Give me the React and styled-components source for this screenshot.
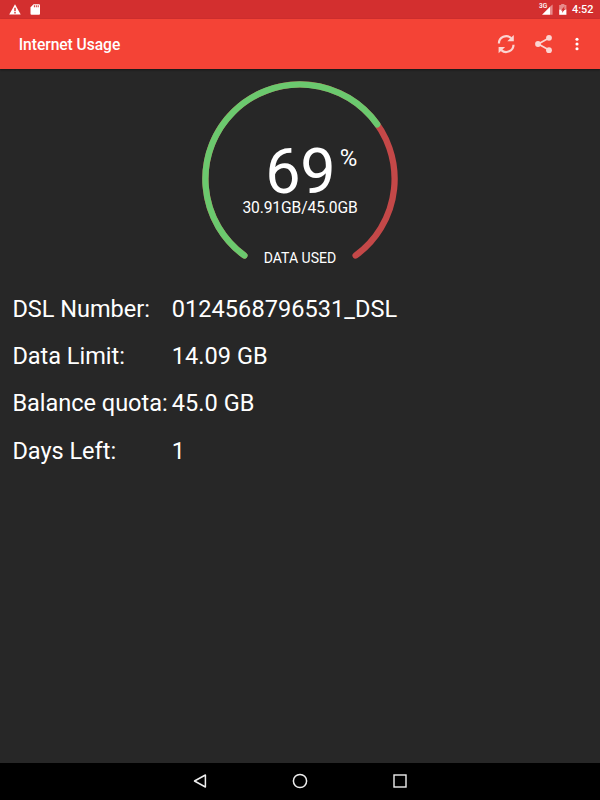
import styled, { createGlobalStyle } from 'styled-components';

const GlobalStyle = createGlobalStyle`
	* {
		box-sizing: border-box;
	}
	body {
		margin: 0;
		background-color: #272727;
		font-family: Roboto, 'Liberation Sans', sans-serif;
	}
	svg {
		display: block;
		flex-shrink: 0;
	}
`;

const Screen = styled.div`
	display: flex;
	flex-direction: column;
	width: 600px;
	height: 800px;
	overflow: hidden;
	background-color: #272727;
	color: #fff;
`;

const StatusBar = styled.div`
	display: flex;
	justify-content: space-between;
	height: 18.75px;
	background-color: #d32f2f;
`;
const StatusGroup = styled.div`
	display: flex;
	align-items: center;
`;
const Clock = styled.span`
	width: 28px;
	font-size: 10.9px;
	font-weight: 500;
	line-height: 19px;
	white-space: nowrap;
	padding-top: 1px;
`;
const NetworkType = styled.span`
	align-self: flex-start;
	margin-top: 3px;
	font-size: 6.6px;
	font-weight: 500;
	line-height: 7px;
	width: 8px;
	margin-right: -5px;
	white-space: nowrap;
	z-index: 1;
`;

const Toolbar = styled.header`
	display: flex;
	align-items: center;
	justify-content: space-between;
	height: 50px;
	padding: 0 13.5px 0 18.75px;
	background-color: #f44336;
	box-shadow: 0 1px 2px rgba(0, 0, 0, 0.45);
	z-index: 1;
`;
const Title = styled.h1`
	margin: 0;
	font-size: 15.63px;
	font-weight: 500;
	letter-spacing: -0.06px;
	line-height: 20px;
	padding-top: 2px;
`;
const Actions = styled.div`
	display: flex;
	align-items: center;
`;

const Content = styled.main`
	flex: 1;
	padding-top: 10.25px;
`;
const Gauge = styled.div`
	display: grid;
	justify-content: center;
	& > * {
		grid-area: 1 / 1;
	}
`;
const GaugeText = styled.div`
	display: flex;
	flex-direction: column;
	align-items: center;
	padding-top: 63px;
`;
const Percent = styled.div`
	display: flex;
	align-items: flex-start;
	height: 57px;
	padding-left: 22.5px;
	font-size: 63px;
	letter-spacing: -0.5px;
	line-height: 60px;
`;
const PercentSign = styled.span`
	margin: 3.5px 0 0 4.5px;
	font-size: 24px;
	letter-spacing: 0;
	line-height: 24px;
`;
const Amount = styled.div`
	font-size: 15.63px;
	letter-spacing: -0.12px;
	line-height: 17px;
`;
const Caption = styled.div`
	margin-top: 33px;
	font-size: 14.06px;
	line-height: 18px;
`;

const Details = styled.dl`
	display: grid;
	grid-template-columns: 159.3px 1fr;
	grid-auto-rows: 47.3px;
	align-items: center;
	margin: 0;
	padding: 16.2px 12.4px 0;
	font-size: 23.55px;
	white-space: nowrap;
`;
const Label = styled.dt`
	line-height: 28px;
	letter-spacing: -0.03px;
`;
const Value = styled.dd`
	margin: 0;
	line-height: 28px;
	letter-spacing: 0.05px;
`;

const NavBar = styled.nav`
	display: flex;
	align-items: center;
	justify-content: center;
	gap: 80px;
	height: 37.5px;
	background-color: #000;
`;

const rows = [
	['DSL Number:', '0124568796531_DSL'],
	['Data Limit:', '14.09 GB'],
	['Balance quota:', '45.0 GB'],
	['Days Left:', '1'],
];

const CENTER = 100;
const RADIUS = 94.6;
const START = 126;
const SWEEP = 288;

function point(deg) {
	const rad = (deg * Math.PI) / 180;
	return `${CENTER + RADIUS * Math.cos(rad)} ${CENTER + RADIUS * Math.sin(rad)}`;
}

function arc(from, to) {
	return `M${point(from)} A${RADIUS} ${RADIUS} 0 ${to - from > 180 ? 1 : 0} 1 ${point(to)}`;
}

function UsageGauge({ percent }) {
	return (
		<Gauge>
			<svg width="200" height="190" fill="none" strokeWidth="6.3" strokeLinecap="round">
				<path d={arc(START, START + SWEEP)} stroke="#c44848" />
				<path d={arc(START, START + (SWEEP * percent) / 100)} stroke="#6bc96e" />
			</svg>
			<GaugeText>
				<Percent>
					{percent}
					<PercentSign>%</PercentSign>
				</Percent>
				<Amount>30.91GB/45.0GB</Amount>
				<Caption>DATA USED</Caption>
			</GaugeText>
		</Gauge>
	);
}

export default function App() {
	return (
		<>
			<GlobalStyle />
			<Screen>
				<StatusBar>
					<StatusGroup>
						<svg width="50" height="19">
							<path d="M15 4.2 20.7 14.6H9.2z" fill="#fff" />
							<path d="M14.3 7.8h1.4v3.4h-1.4zM14.3 12h1.4v1.4h-1.4z" fill="#d32f2f" />
							<path d="M33.6 4.2H39q1 0 1 1V13.8q0 1-1 1H31.5q-1 0-1-1V7.2z" fill="#fff" />
							<path d="M33.9 5.2h1v2h-1zM35.8 5.2h1v2h-1zM37.7 5.2h1v2h-1z" fill="#d32f2f" />
						</svg>
					</StatusGroup>
					<StatusGroup>
						<NetworkType>3G</NetworkType>
						<svg width="30" height="19">
							<path d="M8 6.7V14.8H0z" fill="#fff" />
							<path d="M10.6 4.4V14.8H8V6.7z" fill="#e88a8a" />
							<path d="M17.2 5.1h2V4h3.2v1.1h2v4.4h-7.2z" fill="#e88a8a" />
							<path d="M17.2 9.5h7.2V14.8h-7.2z" fill="#fff" />
							<path d="m22.6 6.2-3.8 4.2h1.7l-.6 2.6 3.6-4.2h-1.6z" fill="#d32f2f" />
						</svg>
						<Clock>4:52</Clock>
					</StatusGroup>
				</StatusBar>
				<Toolbar>
					<Title>Internet Usage</Title>
					<Actions>
						<svg width="38" height="24" fill="none" stroke="#fbd5d2" strokeWidth="2.2">
							<path d="M1.9 11.5A7.3 7.3 0 0 1 14.1 6.1M16.5 12.7A7.3 7.3 0 0 1 4.3 18.1" />
							<path d="M16.8 3V9.2H10.3zM1.6 21.2V15H8.1z" fill="#fbd5d2" stroke="none" />
						</svg>
						<svg width="34" height="24" fill="#fbd5d2">
							<path d="M14 6 3.3 12 14 18" fill="none" stroke="#fbd5d2" strokeWidth="1.7" />
							<circle cx="14" cy="5.8" r="2.9" />
							<circle cx="3" cy="12" r="2.9" />
							<circle cx="14" cy="18.2" r="2.9" />
						</svg>
						<svg width="18" height="24" fill="#fff">
							<circle cx="8" cy="7.3" r="1.55" />
							<circle cx="8" cy="12" r="1.55" />
							<circle cx="8" cy="16.7" r="1.55" />
						</svg>
					</Actions>
				</Toolbar>
				<Content>
					<UsageGauge percent={69} />
					<Details>
						{rows.map(([label, value]) => [
							<Label key={label}>{label}</Label>,
							<Value key={value}>{value}</Value>,
						])}
					</Details>
				</Content>
				<NavBar>
					<svg width="20" height="20" fill="none" stroke="#eee" strokeWidth="1.5">
						<path d="M15.4 4V16L4.5 10z" strokeLinejoin="round" />
					</svg>
					<svg width="20" height="20" fill="none" stroke="#eee" strokeWidth="1.5">
						<circle cx="10" cy="10" r="6.6" />
					</svg>
					<svg width="20" height="20" fill="none" stroke="#eee" strokeWidth="1.4">
						<rect x="4" y="4" width="12" height="12" />
					</svg>
				</NavBar>
			</Screen>
		</>
	);
}
